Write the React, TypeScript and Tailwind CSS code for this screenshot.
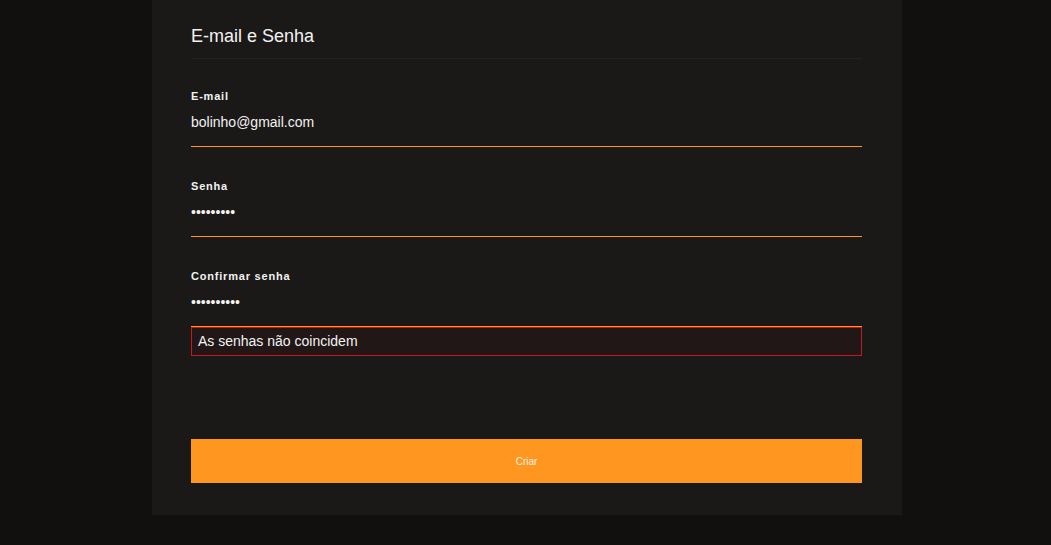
import React from "react";

const Campo = ({ label, valor }: { label: string; valor: string }) => (
  <div className="flex flex-col">
    <label className="text-[11px] leading-[14px] font-bold tracking-[0.8px] text-[#f2f2f2]">
      {label}
    </label>
    <div className="mt-[9px] h-[35px] border-b border-[#ff961f] text-[14px] leading-[20px] text-[#f2f2f2]">
      {valor}
    </div>
  </div>
);

export default function App() {
  return (
    <div
      className="min-h-[545px] w-full bg-[#12100e] flex justify-center pl-[3px]"
      style={{ fontFamily: '"Liberation Sans", Arial, sans-serif' }}
    >
      <div className="w-[750px] h-[515px] bg-[#1b1917] pl-[39px] pr-[40px] pt-6 flex flex-col">
        <h2 className="text-[18px] leading-6 text-[#f2f2f2] pb-[10px] border-b border-[#242120]">
          E-mail e Senha
        </h2>

        <div className="mt-[30px] flex flex-col gap-8">
          <Campo label="E-mail" valor="bolinho@gmail.com" />
          <Campo label="Senha" valor="•••••••••" />
          <div className="flex flex-col">
            <Campo label="Confirmar senha" valor="••••••••••" />
            <div className="h-[29px] border border-[#c9161a] bg-[#201716] px-[6px] text-[14px] leading-[27px] text-[#f2f2f2]">
              As senhas não coincidem
            </div>
          </div>
        </div>

        <button className="mt-[83px] h-[44px] w-full bg-[#ff9620] text-[10px] text-[#fff4e6]">
          Criar
        </button>
      </div>
    </div>
  );
}
